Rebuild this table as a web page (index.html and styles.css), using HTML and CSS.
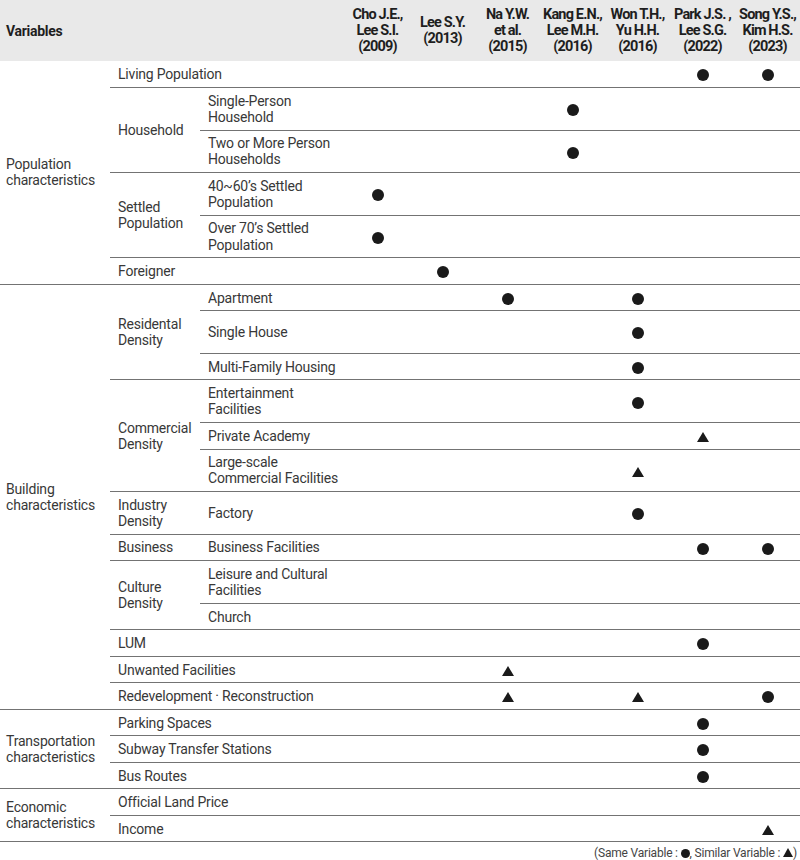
FILE: index.html
```html
<!DOCTYPE html>
<html>
<head>
<meta charset="utf-8">
<link rel="stylesheet" href="styles.css">
</head>
<body>
<table class="tbl">
  <colgroup>
    <col class="c-cat"><col class="c-sub"><col class="c-var">
    <col class="c-s"><col class="c-s"><col class="c-s"><col class="c-s"><col class="c-s"><col class="c-s"><col class="c-s">
  </colgroup>
  <thead>
    <tr class="head">
      <th colspan="3" class="h-var">Variables</th>
      <th>Cho J.E.,<br>Lee S.I.<br>(2009)</th>
      <th>Lee S.Y.<br>(2013)</th>
      <th>Na Y.W.<br>et al.<br>(2015)</th>
      <th>Kang E.N.,<br>Lee M.H.<br>(2016)</th>
      <th>Won T.H.,<br>Yu H.H.<br>(2016)</th>
      <th>Park J.S. ,<br>Lee S.G.<br>(2022)</th>
      <th>Song Y.S.,<br>Kim H.S.<br>(2023)</th>
    </tr>
  </thead>
  <tbody>
    <tr class="r1">
      <td rowspan="6" class="cat">Population<br>characteristics</td>
      <td colspan="2" class="sub">Living Population</td>
      <td></td><td></td><td></td><td></td><td></td><td><span class="dot"></span></td><td><span class="dot"></span></td>
    </tr>
    <tr class="r2">
      <td rowspan="2" class="sub">Household</td>
      <td class="var">Single-Person<br>Household</td>
      <td></td><td></td><td></td><td><span class="dot"></span></td><td></td><td></td><td></td>
    </tr>
    <tr class="r2">
      <td class="var">Two or More Person<br>Households</td>
      <td></td><td></td><td></td><td><span class="dot"></span></td><td></td><td></td><td></td>
    </tr>
    <tr class="r2">
      <td rowspan="2" class="sub">Settled<br>Population</td>
      <td class="var">40~60’s Settled<br>Population</td>
      <td><span class="dot"></span></td><td></td><td></td><td></td><td></td><td></td><td></td>
    </tr>
    <tr class="r2">
      <td class="var">Over 70’s Settled<br>Population</td>
      <td><span class="dot"></span></td><td></td><td></td><td></td><td></td><td></td><td></td>
    </tr>
    <tr class="r1">
      <td colspan="2" class="sub">Foreigner</td>
      <td></td><td><span class="dot"></span></td><td></td><td></td><td></td><td></td><td></td>
    </tr>

    <tr class="r1">
      <td rowspan="13" class="cat">Building<br>characteristics</td>
      <td rowspan="3" class="sub">Residental<br>Density</td>
      <td class="var">Apartment</td>
      <td></td><td></td><td><span class="dot"></span></td><td></td><td><span class="dot"></span></td><td></td><td></td>
    </tr>
    <tr class="r2">
      <td class="var">Single House</td>
      <td></td><td></td><td></td><td></td><td><span class="dot"></span></td><td></td><td></td>
    </tr>
    <tr class="r1">
      <td class="var">Multi-Family Housing</td>
      <td></td><td></td><td></td><td></td><td><span class="dot"></span></td><td></td><td></td>
    </tr>
    <tr class="r2">
      <td rowspan="3" class="sub">Commercial<br>Density</td>
      <td class="var">Entertainment<br>Facilities</td>
      <td></td><td></td><td></td><td></td><td><span class="dot"></span></td><td></td><td></td>
    </tr>
    <tr class="r1">
      <td class="var">Private Academy</td>
      <td></td><td></td><td></td><td></td><td></td><td><span class="tri"></span></td><td></td>
    </tr>
    <tr class="r2">
      <td class="var">Large-scale<br>Commercial Facilities</td>
      <td></td><td></td><td></td><td></td><td><span class="tri"></span></td><td></td><td></td>
    </tr>
    <tr class="r2">
      <td class="sub">Industry<br>Density</td>
      <td class="var">Factory</td>
      <td></td><td></td><td></td><td></td><td><span class="dot"></span></td><td></td><td></td>
    </tr>
    <tr class="r1">
      <td class="sub">Business</td>
      <td class="var">Business Facilities</td>
      <td></td><td></td><td></td><td></td><td></td><td><span class="dot"></span></td><td><span class="dot"></span></td>
    </tr>
    <tr class="r2">
      <td rowspan="2" class="sub">Culture<br>Density</td>
      <td class="var">Leisure and Cultural<br>Facilities</td>
      <td></td><td></td><td></td><td></td><td></td><td></td><td></td>
    </tr>
    <tr class="r1">
      <td class="var">Church</td>
      <td></td><td></td><td></td><td></td><td></td><td></td><td></td>
    </tr>
    <tr class="r1">
      <td colspan="2" class="sub">LUM</td>
      <td></td><td></td><td></td><td></td><td></td><td><span class="dot"></span></td><td></td>
    </tr>
    <tr class="r1">
      <td colspan="2" class="sub">Unwanted Facilities</td>
      <td></td><td></td><td><span class="tri"></span></td><td></td><td></td><td></td><td></td>
    </tr>
    <tr class="r1">
      <td colspan="2" class="sub">Redevelopment · Reconstruction</td>
      <td></td><td></td><td><span class="tri"></span></td><td></td><td><span class="tri"></span></td><td></td><td><span class="dot"></span></td>
    </tr>

    <tr class="r1">
      <td rowspan="3" class="cat">Transportation<br>characteristics</td>
      <td colspan="2" class="sub">Parking Spaces</td>
      <td></td><td></td><td></td><td></td><td></td><td><span class="dot"></span></td><td></td>
    </tr>
    <tr class="r1">
      <td colspan="2" class="sub">Subway Transfer Stations</td>
      <td></td><td></td><td></td><td></td><td></td><td><span class="dot"></span></td><td></td>
    </tr>
    <tr class="r1">
      <td colspan="2" class="sub">Bus Routes</td>
      <td></td><td></td><td></td><td></td><td></td><td><span class="dot"></span></td><td></td>
    </tr>

    <tr class="r1">
      <td rowspan="2" class="cat">Economic<br>characteristics</td>
      <td colspan="2" class="sub">Official Land Price</td>
      <td></td><td></td><td></td><td></td><td></td><td></td><td></td>
    </tr>
    <tr class="r1">
      <td colspan="2" class="sub">Income</td>
      <td></td><td></td><td></td><td></td><td></td><td></td><td><span class="tri"></span></td>
    </tr>
  </tbody>
</table>
<p class="legend">(Same Variable : <span class="ldot"></span>, Similar Variable : <span class="ltri"></span>)</p>
</body>
</html>
```
FILE: styles.css
```css
html, body {
  margin: 0;
  padding: 0;
  background: #ffffff;
}
body {
  font-family: Roboto, "Liberation Sans", sans-serif;
  color: #383838;
  width: 800px;
}
.tbl {
  width: 800px;
  border-collapse: collapse;
  table-layout: fixed;
  font-size: 14px;
  line-height: 16.1px;
  letter-spacing: -0.2px;
}
.c-cat { width: 110px; }
.c-sub { width: 90px; }
.c-var { width: 145px; }
.c-s { width: 65px; }

.head {
  background: #e9e9e9;
  height: 61px;
}
.head th {
  font-weight: 700;
  font-size: 14.5px;
  color: #1e1e1e;
  text-align: center;
  vertical-align: middle;
  padding: 0;
  letter-spacing: -0.85px;
  line-height: 16px;
  white-space: nowrap;
}
.head th.h-var {
  text-align: left;
  padding-left: 6px;
  font-size: 14px;
  letter-spacing: -0.3px;
}
.r1 { height: 26.5px; }
.r2 { height: 42.6px; }
td {
  padding: 0;
  border-bottom: 1px solid #737373;
  vertical-align: middle;
  text-align: center;
}
td.cat {
  text-align: left;
  padding-left: 6px;
}
td.sub, td.var {
  text-align: left;
  padding-left: 8px;
}
.dot {
  display: inline-block;
  width: 12px;
  height: 12px;
  border-radius: 50%;
  background: #1a1a1a;
  vertical-align: middle;
}
.tri {
  display: inline-block;
  width: 0;
  height: 0;
  border-left: 6px solid transparent;
  border-right: 6px solid transparent;
  border-bottom: 10px solid #1a1a1a;
  vertical-align: middle;
}
.legend {
  margin: 4px 0 0 0;
  padding-right: 3px;
  text-align: right;
  font-size: 12px;
  line-height: 14px;
  color: #444444;
  letter-spacing: -0.2px;
}
.ldot {
  display: inline-block;
  width: 9px;
  height: 9px;
  border-radius: 50%;
  background: #1a1a1a;
  vertical-align: -1px;
}
.ltri {
  display: inline-block;
  width: 0;
  height: 0;
  border-left: 5px solid transparent;
  border-right: 5px solid transparent;
  border-bottom: 9px solid #1a1a1a;
  vertical-align: 0;
}
```
